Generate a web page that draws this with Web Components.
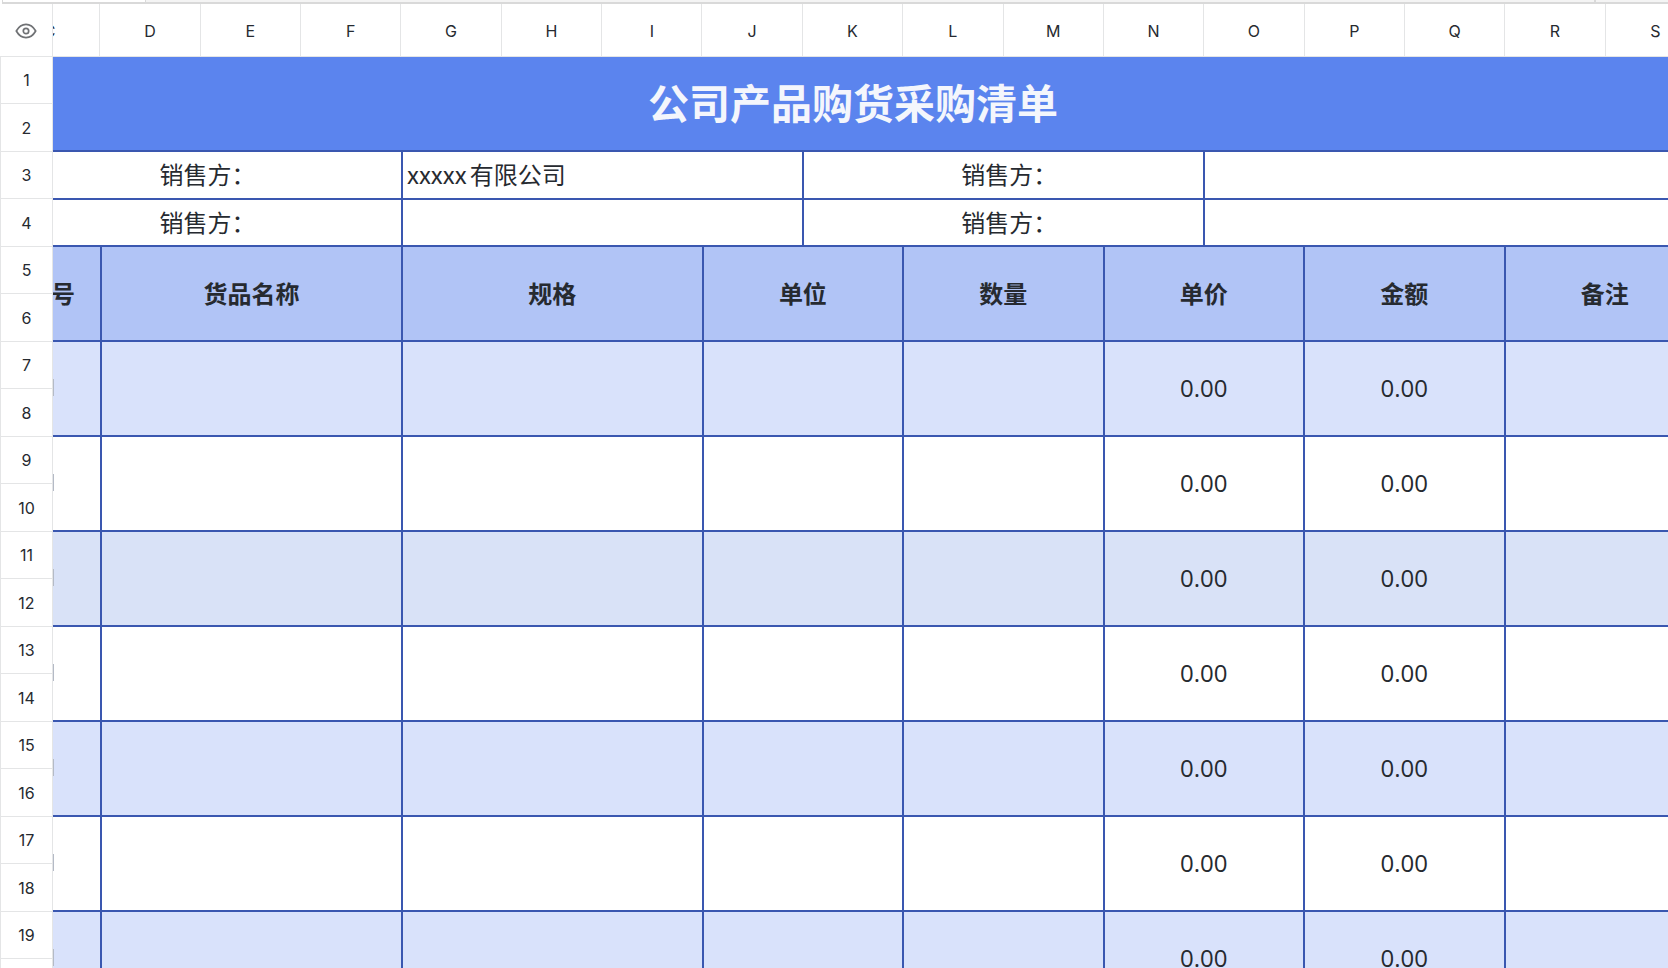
<!DOCTYPE html>
<html lang="zh-CN">
<head>
<meta charset="utf-8">
<meta name="viewport" content="width=device-width, initial-scale=1">
<title>公司产品购货采购清单</title>
<style>
  html, body { height: 100%; margin: 0; }
  body {
    overflow: hidden;
    background: #fff;
    color: #262a30;
    font-family: Inter, "Noto Sans CJK SC", sans-serif;
    --grid: #e4e5e6;
    --line: #3a57b0;
    --gutter: 53px;
    --col-overflow: 91px;
  }
</style>
</head>
<body>
<purchase-sheet></purchase-sheet>

<script>
// Row heights of the sheet, shared by the row numbers and the cells
const ROW_HEIGHTS = [47, 48];
const COLUMNS = 'CDEFGHIJKLMNOPQRS'.split('');
const ROW_COUNT = 20;

// Bottom edge of the formula bar: name box, formula input, trailing tools
class FormulaEdge extends HTMLElement {
  constructor() {
    super();
    this.attachShadow({ mode: 'open' });
    this.shadowRoot.innerHTML = `
      <style>
        :host {
          display: flex;
          height: 2px;
          margin-left: 2px;
          border-left: 1px solid #d9d9d9;
          border-bottom: 2px solid #d9d9d9;
          background: #f4f4f4;
        }
        .name { width: 142px; background: #fff; border-right: 1px solid #d9d9d9; }
        .formula { flex: 1; border-right: 2px solid #d9d9d9; }
        .tools { width: 72px; }
      </style>
      <div class="name"></div><div class="formula"></div><div class="tools"></div>
    `;
  }
}

// Top left corner with the visibility toggle
class SheetCorner extends HTMLElement {
  constructor() {
    super();
    this.attachShadow({ mode: 'open' });
    this.shadowRoot.innerHTML = `
      <style>
        :host { display: block; border-right: 1px solid var(--grid); border-bottom: 1px solid var(--grid); }
        button {
          display: flex;
          align-items: center;
          justify-content: center;
          box-sizing: border-box;
          width: 100%;
          height: 100%;
          padding: 2px 0 0;
          border: 0;
          background: none;
          color: #6f7174;
          cursor: pointer;
        }
      </style>
      <button type="button" aria-label="显示">
        <svg width="22" height="16" viewBox="0 0 22 16" fill="none" stroke="currentColor" stroke-width="1.7">
          <path d="M1.300 8C3.800 3.600 7 1.400 11 1.400S18.200 3.600 20.700 8C18.200 12.400 15 14.600 11 14.600S3.800 12.400 1.300 8Z" stroke-linejoin="round"/>
          <circle cx="11" cy="8" r="2.700"/>
        </svg>
      </button>
    `;
  }
}

// Column letters
class ColumnHeads extends HTMLElement {
  constructor() {
    super();
    this.attachShadow({ mode: 'open' });
    this.shadowRoot.innerHTML = `
      <style>
        :host { display: block; overflow: hidden; border-bottom: 1px solid var(--grid); }
        .letters {
          display: grid;
          grid-template-columns: repeat(${COLUMNS.length}, 1fr);
          width: calc(100% + var(--col-overflow));
          height: 100%;
          margin-left: calc(-1 * var(--gutter));
        }
        span {
          display: flex;
          align-items: center;
          justify-content: center;
          padding-top: 2px;
          border-right: 1px solid var(--grid);
          font-size: 16px;
        }
      </style>
      <div class="letters">${COLUMNS.map(c => `<span>${c}</span>`).join('')}</div>
    `;
  }
}

// Row numbers
class RowHeads extends HTMLElement {
  constructor() {
    super();
    this.attachShadow({ mode: 'open' });
    let rows = '';
    for (let i = 1; i <= ROW_COUNT; i++) rows += `<span>${i}</span>`;
    this.shadowRoot.innerHTML = `
      <style>
        :host { display: block; border-left: 1px solid var(--grid); border-right: 1px solid var(--grid); }
        span {
          display: flex;
          align-items: center;
          justify-content: center;
          box-sizing: border-box;
          height: ${ROW_HEIGHTS[1]}px;
          border-bottom: 1px solid var(--grid);
          font-size: 16px;
        }
        span:nth-child(even) { height: ${ROW_HEIGHTS[0]}px; }
      </style>
      ${rows}
    `;
  }
}

// The merged cells of the purchase list
class SheetCells extends HTMLElement {
  constructor() {
    super();
    this.attachShadow({ mode: 'open' });
    let items = '';
    for (let i = 0; i < 7; i++) {
      items += `
        <tr class="item">
          <td class="index"></td><td colspan="3"></td><td colspan="3"></td><td colspan="2"></td>
          <td colspan="2"></td><td colspan="2">0.00</td><td colspan="2">0.00</td><td colspan="2"></td>
        </tr>`;
    }
    this.shadowRoot.innerHTML = `
      <style>
        :host { display: block; overflow: hidden; }
        table {
          width: calc(100% + var(--col-overflow));
          margin-left: calc(-1 * var(--gutter));
          border-collapse: collapse;
          table-layout: fixed;
          font-family: "Noto Sans CJK SC", sans-serif;
          font-size: 24px;
          line-height: 32px;
          text-align: center;
        }
        th, td { padding: 0 0 2px; border: 2px solid var(--line); }
        tr { height: ${ROW_HEIGHTS[0] + ROW_HEIGHTS[1]}px; }
        .title { height: ${ROW_HEIGHTS[0] + ROW_HEIGHTS[1] - 1}px; }
        .title th {
          padding-bottom: 6px;
          border-top: 0;
          background: #5b84ee;
          color: #f4f6fc;
          font-size: 41px;
          font-weight: 700;
        }
        .party { height: ${ROW_HEIGHTS[1]}px; }
        .party + .party { height: ${ROW_HEIGHTS[0]}px; }
        .party th { font-weight: 400; font-feature-settings: "halt"; }
        .party td { padding-left: 4px; text-align: left; text-autospace: normal; }
        .head th { background: #b1c4f6; font-weight: 700; }
        .item { font-family: "Open Sans", "Noto Sans CJK SC", sans-serif; }
        .item:nth-child(odd) td { background: #d9e2fb; }
        .item:nth-child(7) td { background: #d9e2f7; }
        .index { text-align: left; }
        .index::before {
          content: "";
          display: block;
          width: 1px;
          height: 17px;
          margin-left: calc(var(--gutter) - 2px);
          background: #b4bac6;
        }
      </style>
      <table>
        <colgroup>${COLUMNS.map(() => '<col>').join('')}</colgroup>
        <tbody>
          <tr class="title"><th colspan="17">公司产品购货采购清单</th></tr>
          <tr class="party"><th colspan="4">销售方：</th><td colspan="4">xxxxx有限公司</td><th colspan="4">销售方：</th><td colspan="5"></td></tr>
          <tr class="party"><th colspan="4">销售方：</th><td colspan="4"></td><th colspan="4">销售方：</th><td colspan="5"></td></tr>
          <tr class="head">
            <th>序号</th><th colspan="3">货品名称</th><th colspan="3">规格</th><th colspan="2">单位</th>
            <th colspan="2">数量</th><th colspan="2">单价</th><th colspan="2">金额</th><th colspan="2">备注</th>
          </tr>
          ${items}
        </tbody>
      </table>
    `;
  }
}

class PurchaseSheet extends HTMLElement {
  constructor() {
    super();
    this.attachShadow({ mode: 'open' });
    this.shadowRoot.innerHTML = `
      <style>
        :host { display: flex; flex-direction: column; height: 100%; overflow: hidden; }
        .sheet {
          display: grid;
          flex: 1;
          grid-template-columns: var(--gutter) minmax(0, 1fr);
          grid-template-rows: 53px auto;
          min-height: 0;
        }
      </style>
      <formula-edge></formula-edge>
      <div class="sheet">
        <sheet-corner></sheet-corner>
        <column-heads></column-heads>
        <row-heads></row-heads>
        <sheet-cells></sheet-cells>
      </div>
    `;
  }
}

customElements.define('formula-edge', FormulaEdge);
customElements.define('sheet-corner', SheetCorner);
customElements.define('column-heads', ColumnHeads);
customElements.define('row-heads', RowHeads);
customElements.define('sheet-cells', SheetCells);
customElements.define('purchase-sheet', PurchaseSheet);
</script>
</body>
</html>
